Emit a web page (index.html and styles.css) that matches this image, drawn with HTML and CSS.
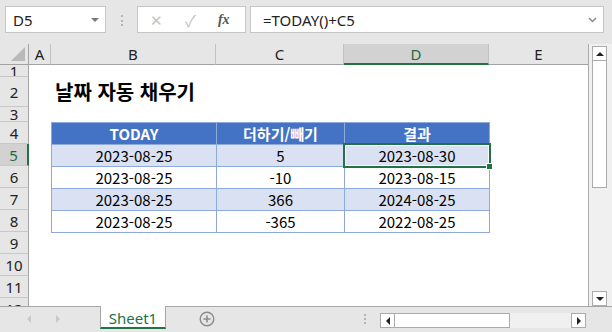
FILE: index.html
```html
<!DOCTYPE html>
<html lang="ko">
<head>
  <meta charset="UTF-8" />
  <meta name="viewport" content="width=device-width, initial-scale=1" />
  <title>날짜 자동 채우기</title>
  <link rel="stylesheet" href="styles.css">
</head>
<body>
  <div class="app">
    <div class="toolbar">
      <div class="namebox"><span>D5</span><i class="caret"></i></div>
      <div class="grip"></div>
      <div class="fxbtns">
        <span class="x">✕</span>
        <span class="ok">✓</span>
        <span class="fx">fx</span>
      </div>
      <div class="formula">
        <span>=TODAY()+C5</span>
        <svg width="9" height="6" viewBox="0 0 9 6"><path d="M1 1 L4.5 4.5 L8 1" fill="none" stroke="#8a8a8a" stroke-width="1.5"/></svg>
      </div>
    </div>

    <div class="main">
      <div class="sheet">
        <div class="corner"><svg width="14" height="14" viewBox="0 0 14 14"><polygon points="14,0 14,14 0,14" fill="#b9b9b9"/></svg></div>
        <div class="ch">A</div>
        <div class="ch">B</div>
        <div class="ch">C</div>
        <div class="ch sel">D</div>
        <div class="ch last">E</div>

        <div class="rh r1">1</div>
        <div class="rh r2">2</div>
        <div class="rh r3">3</div>
        <div class="rh r4">4</div>
        <div class="rh r5 sel">5</div>
        <div class="rh r6">6</div>
        <div class="rh r7">7</div>
        <div class="rh r8">8</div>
        <div class="rh r9">9</div>
        <div class="rh r10">10</div>
        <div class="rh r11">11</div>
        <div class="rh r12">12</div>

        <div class="title">날짜 자동 채우기</div>

        <table class="data">
          <colgroup><col class="cb"><col class="cc"><col class="cd"></colgroup>
          <tr class="head"><th>TODAY</th><th>더하기/빼기</th><th>결과</th></tr>
          <tr class="band"><td>2023-08-25</td><td>5</td><td class="active">2023-08-30<i class="handle"></i></td></tr>
          <tr><td>2023-08-25</td><td>-10</td><td>2023-08-15</td></tr>
          <tr class="band"><td>2023-08-25</td><td>366</td><td>2024-08-25</td></tr>
          <tr><td>2023-08-25</td><td>-365</td><td>2022-08-25</td></tr>
        </table>
      </div>

      <div class="vscroll">
        <div class="sbtn"><i class="tri up"></i></div>
        <div class="vthumb"></div>
        <div class="vtrack"></div>
        <div class="sbtn"><i class="tri down"></i></div>
      </div>
    </div>

    <div class="tabbar">
      <div class="nav"><i class="navl"></i><i class="navr"></i></div>
      <div class="tab">Sheet1</div>
      <div class="addsheet">
        <svg width="16" height="16" viewBox="0 0 16 16"><circle cx="8" cy="8" r="6.8" fill="none" stroke="#8c8c8c" stroke-width="1.4"/><path d="M8 4.5 V11.5 M4.5 8 H11.5" stroke="#8c8c8c" stroke-width="1.6"/></svg>
      </div>
      <div class="grip tgrip"></div>
      <div class="hscroll">
        <div class="sbtn"><i class="tri left"></i></div>
        <div class="hthumb"></div>
        <div class="htrack"></div>
        <div class="sbtn"><i class="tri right"></i></div>
      </div>
    </div>
  </div>
</body>
</html>
```

FILE: styles.css
```css
body {
  margin: 0;
  width: 612px;
  height: 332px;
  overflow: hidden;
  background: #e6e6e6;
  font-family: "Noto Sans", "Noto Sans CJK KR", sans-serif;
  color: #222;
}
.app {
  display: flex;
  flex-direction: column;
  height: 332px;
}

/* formula bar */
.toolbar {
  height: 44px;
  box-sizing: border-box;
  padding: 6px 0 0 5px;
  display: flex;
  align-items: flex-start;
}
.namebox {
  width: 101px;
  height: 27px;
  box-sizing: border-box;
  border: 1px solid #c6c6c6;
  background: #fff;
  display: flex;
  align-items: center;
  justify-content: space-between;
  padding: 0 6px 0 7px;
  font-size: 15px;
}
.caret {
  border-left: 4px solid transparent;
  border-right: 4px solid transparent;
  border-top: 4px solid #7a7a7a;
}
.grip {
  width: 0;
  height: 11px;
  border-left: 2px dotted #b4b4b4;
  margin: 9px 14px 0 15px;
}
.fxbtns {
  width: 109px;
  height: 27px;
  box-sizing: border-box;
  border: 1px solid #c6c6c6;
  background: #fff;
  display: flex;
  align-items: center;
  color: #c4c4c4;
}
.fxbtns .x { margin-left: 12px; font-size: 15px; }
.fxbtns .ok { margin-left: 22px; font-size: 16px; }
.fxbtns .fx {
  margin-left: 22px;
  font-family: "Liberation Serif", serif;
  font-style: italic;
  font-weight: bold;
  font-size: 14px;
  color: #555;
}
.formula {
  width: 354px;
  height: 27px;
  margin-left: 4px;
  box-sizing: border-box;
  border: 1px solid #c6c6c6;
  background: #fff;
  display: flex;
  align-items: center;
  justify-content: space-between;
  padding: 0 6px 0 12px;
  font-size: 15px;
}

/* sheet */
.main {
  display: flex;
  height: 262px;
}
.sheet {
  width: 588px;
  height: 262px;
  overflow: hidden;
  background: #fff;
  display: grid;
  grid-template-columns: 29px 22px 165px 128px 145px 99px;
  grid-template-rows: 21px 12px 30px 15px repeat(9, 22px);
  font-size: 15px;
}
.corner, .ch {
  background: #e6e6e6;
  border-bottom: 1px solid #a3a3a3;
  border-right: 1px solid #c2c2c2;
  box-sizing: border-box;
}
.corner {
  display: flex;
  align-items: flex-end;
  justify-content: flex-end;
  padding: 0 3px 3px 0;
  border-right-color: #a3a3a3;
}
.ch {
  display: flex;
  align-items: center;
  justify-content: center;
}
.ch.last { border-right: none; }
.ch.sel {
  background: #d2d2d2;
  border-bottom: 2px solid #217346;
  color: #1e6b41;
}
.rh {
  grid-column: 1;
  background: #e6e6e6;
  border-right: 1px solid #a3a3a3;
  border-bottom: 1px solid #c8c8c8;
  box-sizing: border-box;
  display: flex;
  align-items: center;
  justify-content: center;
  overflow: hidden;
  line-height: 18px;
}
.rh.sel {
  background: #d2d2d2;
  border-right: 2px solid #217346;
  color: #1e6b41;
}
.title {
  grid-column: 3 / 6;
  grid-row: 3;
  padding: 0 0 2px 4px;
  display: flex;
  align-items: center;
  font-family: "Noto Sans CJK KR", sans-serif;
  font-weight: bold;
  font-size: 20px;
  color: #000;
}
.data {
  grid-column: 3 / 6;
  grid-row: 5 / 10;
  border-collapse: collapse;
  table-layout: fixed;
  width: 438px;
  font-family: "Noto Sans CJK KR", sans-serif;
  font-size: 15px;
}
.cb { width: 165px; }
.cc { width: 128px; }
.cd { width: 145px; }
.data th, .data td {
  height: 22px;
  padding: 0;
  border: 1px solid #8eaadb;
  text-align: center;
  line-height: 20px;
  box-sizing: border-box;
  color: #000;
}
.data th {
  background: #4472c4;
  color: #fff;
  font-weight: bold;
}
.data .band td { background: #d9e1f2; }
.data td.active {
  position: relative;
  box-shadow: inset 0 0 0 1px #fff;
}
.data td.active::after {
  content: "";
  position: absolute;
  left: -2px;
  top: -2px;
  right: -2px;
  bottom: -2px;
  border: 2px solid #217346;
}
.handle {
  position: absolute;
  right: -4px;
  bottom: -4px;
  width: 5px;
  height: 5px;
  background: #217346;
  border: 1px solid #fff;
  z-index: 1;
}

/* scrollbars */
.vscroll {
  width: 24px;
  box-sizing: border-box;
  border-left: 1px solid #ababab;
  background: #f0f0f0;
  padding: 2px 0 0 3px;
  display: flex;
  flex-direction: column;
}
.sbtn {
  width: 15px;
  height: 15px;
  box-sizing: border-box;
  border: 1px solid #ababab;
  background: #fff;
  display: flex;
  align-items: center;
  justify-content: center;
}
.vthumb {
  width: 15px;
  height: 127px;
  box-sizing: border-box;
  border: 1px solid #ababab;
  border-top: none;
  background: #fff;
}
.vtrack { flex: 1; }
.tri { width: 0; height: 0; }
.tri.up {
  border-left: 4px solid transparent;
  border-right: 4px solid transparent;
  border-bottom: 4px solid #222;
}
.tri.down {
  border-left: 4px solid transparent;
  border-right: 4px solid transparent;
  border-top: 4px solid #222;
}
.tri.left {
  border-top: 4px solid transparent;
  border-bottom: 4px solid transparent;
  border-right: 4px solid #222;
}
.tri.right {
  border-top: 4px solid transparent;
  border-bottom: 4px solid transparent;
  border-left: 4px solid #222;
}

/* sheet tabs */
.tabbar {
  height: 26px;
  box-sizing: border-box;
  border-top: 1px solid #a6a6a6;
  display: flex;
  align-items: flex-start;
}
.nav {
  width: 100px;
  display: flex;
  padding: 8px 0 0 27px;
  box-sizing: border-box;
}
.navl, .navr {
  width: 0;
  height: 0;
  border-top: 4px solid transparent;
  border-bottom: 4px solid transparent;
}
.navl { border-right: 4px solid #c8c8c8; }
.navr { border-left: 4px solid #c8c8c8; margin-left: 25px; }
.tab {
  width: 66px;
  height: 23px;
  margin-top: -1px;
  box-sizing: border-box;
  background: #fff;
  border-left: 1px solid #a6a6a6;
  border-right: 1px solid #a6a6a6;
  border-bottom: 2px solid #217346;
  color: #217346;
  font-size: 15px;
  display: flex;
  align-items: center;
  justify-content: center;
  padding-top: 2px;
}
.addsheet {
  margin: 3px 0 0 33px;
  height: 16px;
}
.tgrip {
  margin: 7px 0 0 149px;
  height: 10px;
}
.hscroll {
  margin: 6px 0 0 14px;
  width: 206px;
  height: 15px;
  display: flex;
  background: #f0f0f0;
}
.hthumb {
  width: 115px;
  height: 15px;
  box-sizing: border-box;
  border: 1px solid #ababab;
  border-left: none;
  background: #fff;
}
.htrack { flex: 1; }
```
